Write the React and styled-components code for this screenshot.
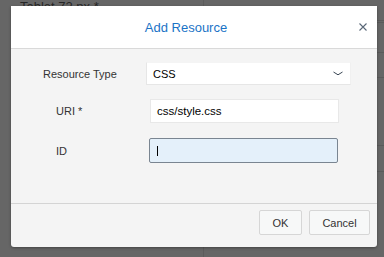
import React from "react";
import styled, { createGlobalStyle } from "styled-components";

const Global = createGlobalStyle`
  html, body { margin: 0; padding: 0; }
  body {
    background: #666666;
    font-family: "Liberation Sans", Arial, sans-serif;
    width: 384px;
    height: 257px;
    overflow: hidden;
  }
`;

const Page = styled.div`
  position: relative;
  width: 384px;
  height: 257px;
  background: #666666;
  overflow: hidden;
`;

const BackText = styled.div`
  position: absolute;
  left: 20px;
  top: 0px;
  font-size: 13px;
  line-height: 13px;
  color: #262626;
`;

const VLine = styled.div`
  position: absolute;
  left: 203px;
  top: 0;
  width: 1px;
  height: 257px;
  background: #5c5c5c;
`;

const HLine = styled.div`
  position: absolute;
  left: 377px;
  width: 7px;
  height: 1px;
  top: ${(p) => p.$y}px;
  background: #5a5a5a;
`;

const Dialog = styled.div`
  position: absolute;
  left: 11px;
  top: 6px;
  width: 366px;
  height: 241px;
  background: #f4f4f4;
  border-radius: 0 0 3px 3px;
  box-shadow: 0 1px 3px rgba(0, 0, 0, 0.35);
  display: flex;
  flex-direction: column;
  overflow: hidden;
`;

const Header = styled.div`
  height: 42px;
  background: #ffffff;
  border-bottom: 1px solid #d9d9d9;
  display: flex;
  align-items: center;
  justify-content: center;
  position: relative;
  flex: none;
`;

const Title = styled.div`
  font-size: 13px;
  color: #1a73c6;
  margin-left: -16px;
`;

const Close = styled.button`
  position: absolute;
  right: 9px;
  top: 16px;
  width: 10px;
  height: 10px;
  padding: 0;
  border: 0;
  background: transparent;
  display: flex;
  align-items: center;
  justify-content: center;
`;

const Body = styled.div`
  flex: 1;
  padding-top: 13px;
  display: flex;
  flex-direction: column;
`;

const Row = styled.div`
  display: flex;
  align-items: center;
  height: ${(p) => p.$h}px;
  margin-bottom: ${(p) => p.$mb}px;
`;

const Label = styled.div`
  width: ${(p) => p.$w}px;
  padding-left: ${(p) => p.$pl}px;
  box-sizing: border-box;
  font-size: 11px;
  color: #333333;
  flex: none;
`;

const Select = styled.div`
  width: 205px;
  height: 23px;
  box-sizing: border-box;
  background: #ffffff;
  border: 1px solid #e6e6e6;
  border-top-color: #f4f4f4;
  border-right-color: #f0f0f0;
  display: flex;
  align-items: center;
  justify-content: space-between;
  padding: 0 7px 0 6px;
  font-size: 11px;
  color: #000;
`;

const Input = styled.div`
  width: 189px;
  height: ${(p) => (p.$focus ? 25 : 24)}px;
  box-sizing: border-box;
  background: ${(p) => (p.$focus ? "#e4f0fa" : "#ffffff")};
  border: 1px solid ${(p) => (p.$focus ? "#7a8591" : "#e8e8e8")};
  border-radius: ${(p) => (p.$focus ? "2px" : "0")};
  display: flex;
  align-items: center;
  padding-left: 6px;
  font-size: 11.5px;
  color: #000;
`;

const Caret = styled.span`
  display: inline-block;
  width: 1px;
  height: 10px;
  background: #000;
  margin-left: 1px;
`;

const Footer = styled.div`
  height: 37px;
  border-top: 1px solid #d4d4d4;
  display: flex;
  justify-content: flex-end;
  align-items: flex-start;
  padding: 6px 7px 0 0;
  gap: 7px;
  flex: none;
`;

const Button = styled.button`
  height: 25px;
  width: ${(p) => p.$w}px;
  box-sizing: border-box;
  background: #f7f8f8;
  border: 1px solid #d6d6d6;
  border-radius: 2px;
  font-family: "Liberation Sans", Arial, sans-serif;
  font-size: 11px;
  color: #333;
  padding: 0;
`;

export default function App() {
  return (
    <Page>
      <Global />
      <BackText>Tablet 72 px *</BackText>
      <VLine />
      <HLine $y={20} />
      <HLine $y={22} />
      <HLine $y={52} />
      <HLine $y={77} />
      <HLine $y={145} />
      <HLine $y={171} />
      <Dialog>
        <Header>
          <Title>Add Resource</Title>
          <Close aria-label="Close">
            <svg width="8" height="8" viewBox="0 0 8 8">
              <path d="M0.5 0.5 L7.5 7.5 M7.5 0.5 L0.5 7.5" stroke="#5a6878" strokeWidth="1.1" />
            </svg>
          </Close>
        </Header>
        <Body>
          <Row $h={23} $mb={14}>
            <Label $w={135} $pl={32}>Resource Type</Label>
            <Select>
              <span>CSS</span>
              <svg width="10" height="5" viewBox="0 0 10 5">
                <path d="M0.5 1 L5 3.8 L9.5 1" stroke="#3a4654" strokeWidth="1" fill="none" />
              </svg>
            </Select>
          </Row>
          <Row $h={24} $mb={15}>
            <Label $w={139} $pl={45}>URI *</Label>
            <Input>css/style.css</Input>
          </Row>
          <Row $h={25} $mb={0}>
            <Label $w={138} $pl={45}>ID</Label>
            <Input $focus>
              <Caret />
            </Input>
          </Row>
        </Body>
        <Footer>
          <Button $w={43}>OK</Button>
          <Button $w={61}>Cancel</Button>
        </Footer>
      </Dialog>
    </Page>
  );
}
